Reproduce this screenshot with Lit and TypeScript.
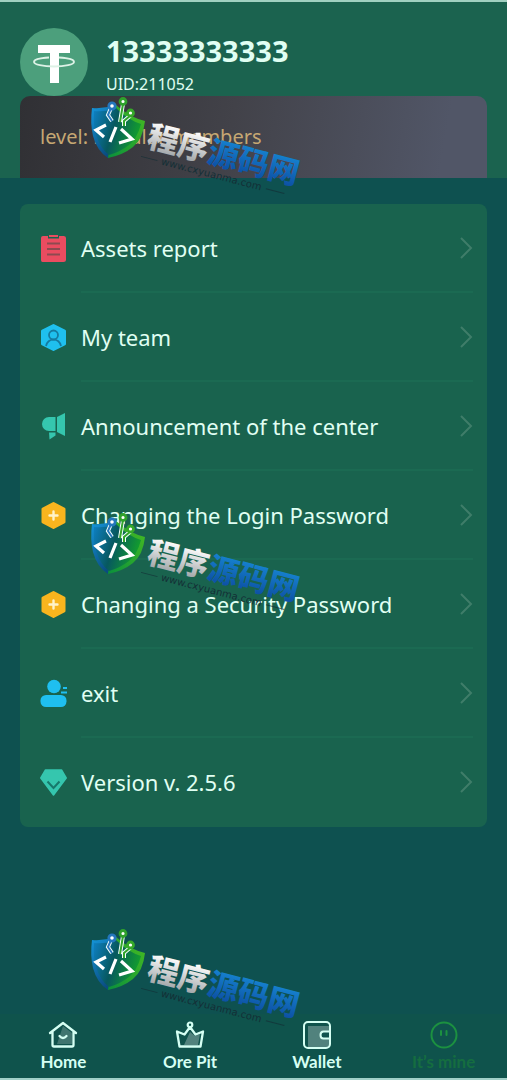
import { LitElement, html, svg, css } from "lit";
import { customElement, property } from "lit/decorators.js";
import { classMap } from "lit/directives/class-map.js";

const icons: Record<string, unknown> = {
  report: svg`
    <path fill="#ea4c60" d="M3 2h5v2.500h11V2h4.500Q26 2 26 4v22q0 2-2.500 2h-21Q1 28 1 26V4q0-2 2-2z"/>
    <path fill="#ea4c60" d="M9 1h9v2H9z"/>
    <path stroke="#8d4a50" stroke-width="2" d="M7 9.500h13M7 15h13M7 20.500h13"/>`,
  team: svg`
    <path fill="#1fc0ee" stroke="#1fc0ee" stroke-width="3" stroke-linejoin="round" d="M13.500 2.500 24.500 8v13L13.500 26.500 2.500 21V8z"/>
    <g fill="none" stroke="#157ba0" stroke-width="1.800"><circle cx="13.500" cy="12" r="4.500"/><path d="M6 23c1-4 4-6.300 7.500-6.300S20 19 21 23"/></g>`,
  notice: svg`
    <path fill="#35c6ae" d="M15.500 5v14H9a7 7 0 0 1 0-14zM17 5 25 1v23l-8-4zM9 20.500h6.500v3l-6 4z"/>`,
  plus: svg`
    <path fill="#f9b51e" stroke="#f9b51e" stroke-width="3" stroke-linejoin="round" d="M13.500 2.500 24 8v13L13.500 26.500 3 21V8z"/>
    <path stroke="#fff3c9" stroke-width="2.400" stroke-linecap="round" d="M13.500 10.500v8M9.500 14.500h8"/>`,
  exit: svg`
    <circle cx="14" cy="7.500" r="6.800" fill="#1fbff0"/>
    <rect x="0.500" y="16" width="26" height="12" rx="5.500" fill="#1fbff0"/>
    <path stroke="#1fbff0" stroke-width="1.800" d="M23 9h4M21 13.500h6"/>`,
  version: svg`
    <path fill="#35c6ae" stroke="#35c6ae" stroke-width="1.500" stroke-linejoin="round" d="M5.500 2h16l4.700 8L13.500 27 .8 10z"/>
    <path fill="none" stroke="#17796c" stroke-width="2" d="m7.500 13.500 6 6.500 6-6.500"/>`,
  home: svg`
    <path fill="#ffffff" fill-opacity=".2" d="M15 6l9 7v11H9z"/>
    <path fill="none" stroke="#d5fff3" stroke-width="2.300" stroke-linejoin="round" stroke-linecap="round" d="M2 13 15 3 28 13M4.500 11.500V25q0 1.500 1.500 1.500h18q1.500 0 1.500-1.500V11.500"/>
    <path fill="none" stroke="#d5fff3" stroke-width="2.300" stroke-linecap="round" d="M11.500 16q3.500 4 7 0"/>`,
  crown: svg`
    <path fill="#ffffff" fill-opacity=".28" d="m15 12 5 4 5-2-2 11H9z"/>
    <path fill="none" stroke="#d5fff3" stroke-width="2.300" stroke-linejoin="round" d="M4.500 26.500 2 11.500 9.500 14.500 15 7l5.500 7.500 7.500-3-2.500 15z"/>
    <circle cx="15" cy="4.800" r="2.300" fill="#0f534c" stroke="#d5fff3" stroke-width="2.200"/>`,
  wallet: svg`
    <path fill="#ffffff" fill-opacity=".28" d="M6 6h21v6h-8v6h8v9H6z"/>
    <rect x="2" y="2" width="26" height="26" rx="4" fill="none" stroke="#d5fff3" stroke-width="2"/>
    <path fill="#0f544e" stroke="#d5fff3" stroke-width="2" stroke-linejoin="round" d="M28 11.500h-6.500q-3 0-3 3.500t3 3.500H28z"/>`,
  face: svg`
    <circle cx="15" cy="15" r="12.500" fill="none" stroke="#1c9140" stroke-width="2"/>
    <path stroke="#1c9140" stroke-width="2" stroke-linecap="round" d="M12 11v4M17.500 11v4"/>`,
};

@customElement("source-mark")
export class SourceMark extends LitElement {
  static styles = css`
    :host { display: block; width: 220px; height: 100px; pointer-events: none; }
    svg { display: block; overflow: visible; }
    .name { font: 900 31px "Noto Sans CJK SC", sans-serif; }
    .site { font: 10px "DejaVu Sans", sans-serif; fill: #142f36; }
  `;

  render() {
    return html`<svg width="220" height="100" viewBox="0 0 220 100" aria-hidden="true">
      <defs>
        <linearGradient id="blue" x1="0" y1="0" x2=".5" y2="1"><stop stop-color="#1598dc"/><stop offset="1" stop-color="#0a4c80"/></linearGradient>
        <linearGradient id="green" x1="1" y1="0" x2="0" y2="1"><stop stop-color="#49bd20"/><stop offset="1" stop-color="#0a8f3c"/></linearGradient>
        <linearGradient id="core" x1="0" y1="0" x2="1" y2=".3"><stop stop-color="#0e80c4"/><stop offset=".5" stop-color="#07585f"/><stop offset="1" stop-color="#129a30"/></linearGradient>
        <linearGradient id="silver" x1="0" y1="0" x2="0" y2="1"><stop offset=".2" stop-color="#fff"/><stop offset="1" stop-color="#91979a"/></linearGradient>
        <linearGradient id="ink" x1="0" y1="0" x2="0" y2="1"><stop offset=".2" stop-color="#1682cf"/><stop offset="1" stop-color="#0b479c"/></linearGradient>
      </defs>
      <path fill="url(#blue)" d="M2 11Q14 12 26 8L18 61Q7 54 3 39Q0 26 2 11z"/>
      <path fill="url(#green)" d="M26 8Q41 21 55 24Q53 42 43 50Q33 58 18 61z"/>
      <path fill="url(#core)" d="M4 14Q17 15 26 11Q38 23 51 27Q47 42 39 48Q30 55 19 58Q10 51 6 38Q3 27 4 14z"/>
      <g fill="none" stroke="#f4ffff" stroke-width="4"><path d="M21 11l-3 7 4 6M33 7l-3 18M41 18l-7 6v5"/></g>
      <g fill="none" stroke-width="2"><path stroke="#2979bd" d="M21 11l-3 7 4 6"/><path stroke="#33a52b" d="M33 7l-3 18M41 18l-7 6v5"/></g>
      <g fill="#fff" stroke-width="2.800"><circle cx="22" cy="9" r="3.200" stroke="#2476bd"/><circle cx="33" cy="4.500" r="3" stroke="#2fa12c"/><circle cx="40.500" cy="16" r="3" stroke="#36a929"/></g>
      <path fill="none" stroke="#fff" stroke-width="3.200" d="m16 28-10 5 8 7M26 30l-6 15M31 32l11 10-13 4"/>
      <g transform="rotate(14.500 55 48)">
        <text class="name" x="56" y="49"><tspan fill="url(#silver)">程序</tspan><tspan fill="url(#ink)">源码网</tspan></text>
        <path stroke="#142f36" stroke-opacity=".7" d="M54 60h17M183 60h19"/>
        <text class="site" x="75" y="63">www.cxyuanma.com</text>
      </g>
    </svg>`;
  }
}

@customElement("menu-row")
export class MenuRow extends LitElement {
  @property() icon = "";
  @property() label = "";

  static styles = css`
    :host { display: block; }
    .row { display: flex; align-items: center; width: 100%; height: 89px; box-sizing: border-box; padding: 0 14px 0 20px; gap: 14px; border: 0; background: none; color: #e0fff3; font: 22px/32px "Noto Sans", sans-serif; text-align: left; cursor: pointer; }
    .icon { flex: none; width: 27px; height: 29px; }
    .content { flex: 1; display: flex; align-items: center; justify-content: space-between; height: 100%; box-sizing: border-box; border-bottom: 2px solid #1b6a52; }
    .arrow { flex: none; width: 14px; height: 24px; }
    :host(:last-of-type) .content { border-color: transparent; }
  `;

  render() {
    return html`<button class="row" type="button">
      <svg class="icon" viewBox="0 0 27 29" aria-hidden="true">${icons[this.icon]}</svg>
      <span class="content">
        <span>${this.label}</span>
        <svg class="arrow" viewBox="0 0 14 24" aria-hidden="true"><path fill="none" stroke="#3f7d69" stroke-width="2" d="m2 2 10 10L2 22"/></svg>
      </span>
    </button>`;
  }
}

@customElement("app-root")
export class AppRoot extends LitElement {
  private rows = [
    ["report", "Assets report"],
    ["team", "My team"],
    ["notice", "Announcement of the center"],
    ["plus", "Changing the Login Password"],
    ["plus", "Changing a Security Password"],
    ["exit", "exit"],
    ["version", "Version v. 2.5.6"],
  ];

  private tabs = [
    ["home", "Home"],
    ["crown", "Ore Pit"],
    ["wallet", "Wallet"],
    ["face", "It’s mine"],
  ];

  static styles = css`
    :host { display: flex; flex-direction: column; position: relative; min-height: 100vh; box-sizing: border-box; border-top: 2px solid #a0d0c0; border-bottom: 2px solid #a0d0c8; background: #0e5150; color: #e0fff3; font-family: "Noto Sans", sans-serif; }
    .head { padding: 26px 20px 0; background: #1b634f; }
    .profile { display: flex; gap: 18px; height: 68px; }
    .avatar { flex: none; width: 68px; height: 68px; }
    .who { display: flex; flex-direction: column; }
    .phone { margin: 6px 0 0; font-size: 29px; line-height: 34px; font-weight: 700; }
    .uid { margin: 6px 0 0; font-size: 16px; line-height: 20px; }
    .level { height: 82px; box-sizing: border-box; padding: 0 20px; display: flex; align-items: center; border-radius: 10px 10px 0 0; background: linear-gradient(100deg, #303034, #424249 45%, #515667 90%); color: #c6a873; font-size: 20px; line-height: 30px; }
    .menu { margin: 26px 20px; border-radius: 8px; background: #19634e; overflow: hidden; }
    .tabs { display: grid; grid-template-columns: repeat(4, 1fr); margin-top: auto; padding: 6px 0 4px; background: #0f534c; }
    .tab { display: flex; flex-direction: column; align-items: center; color: #d5fff3; font: 700 17px/24px Lato, sans-serif; text-decoration: none; }
    .tab.on { color: #156d40; }
    .tab svg { width: 30px; height: 30px; }
    .mark { position: absolute; left: 90px; }
    .mark.top { top: 95px; }
    .mark.middle { top: 511px; }
    .mark.bottom { top: 927px; }
  `;

  render() {
    return html`
      <header class="head">
        <div class="profile">
          <svg class="avatar" viewBox="0 0 68 68" aria-hidden="true">
            <circle cx="34" cy="34" r="34" fill="#4c9f7c"/>
            <path fill="#fff" d="M18 17h32v8H39v30h-9V25H18z"/>
            <path fill="none" stroke="#ddf2e6" stroke-width="1.800" d="M29 29.500c-9 .5-15 2-15 4.500s9 4.500 20 4.500S54 36.500 54 34s-6-4-15-4.500"/>
          </svg>
          <div class="who">
            <h1 class="phone">13333333333</h1>
            <p class="uid">UID:211052</p>
          </div>
        </div>
        <div class="level">level: Regular members</div>
      </header>
      <main class="menu">
        ${this.rows.map(([icon, label]) => html`<menu-row icon=${icon} label=${label}></menu-row>`)}
      </main>
      <nav class="tabs">
        ${this.tabs.map(([icon, label]) => html`
          <a href="#${icon}" class=${classMap({ tab: true, on: icon === "face" })}>
            <svg viewBox="0 0 30 30" aria-hidden="true">${icons[icon]}</svg>${label}
          </a>`)}
      </nav>
      <source-mark class="mark top"></source-mark>
      <source-mark class="mark middle"></source-mark>
      <source-mark class="mark bottom"></source-mark>
    `;
  }
}
